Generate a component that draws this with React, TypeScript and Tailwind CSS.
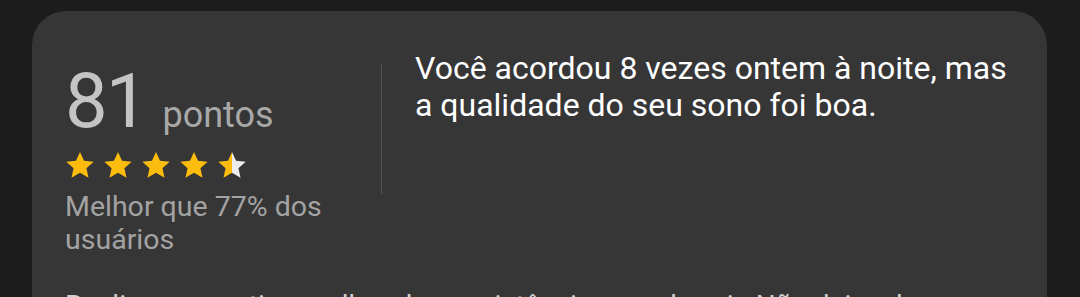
import React from "react";

function Star({ fill = "full" }: { fill?: "full" | "half" }) {
  const id = "halfgrad";
  return (
    <svg width="30" height="28" viewBox="0 0 24 23" className="shrink-0">
      {fill === "half" && (
        <defs>
          <linearGradient id={id} x1="0" x2="1" y1="0" y2="0">
            <stop offset="50%" stopColor="#fcbc0d" />
            <stop offset="50%" stopColor="#ececec" />
          </linearGradient>
        </defs>
      )}
      <path
        d="M12 0.8l3.3 7.2 7.9 0.8-5.9 5.3 1.7 7.8L12 17.9l-7 4 1.7-7.8L0.8 8.8l7.9-0.8z"
        fill={fill === "half" ? `url(#${id})` : "#fcbc0d"}
      />
    </svg>
  );
}

export default function App() {
  return (
    <div
      className="w-[1080px] h-[297px] overflow-hidden bg-[#1c1c1c] pt-[11px] pl-[32px]"
      style={{ fontFamily: "Roboto, 'Noto Sans', sans-serif" }}
    >
      <div className="w-[1015px] h-[320px] rounded-[34px] bg-[#363636] pl-[33px] pr-[100px] pt-[52px]">
        <div className="flex">
          <div className="w-[316px] shrink-0">
            <div className="flex items-baseline text-[#c4c4c4]">
              <span className="text-[76px] leading-[76px] tracking-[-2px]">81</span>
              <span className="ml-[16px] text-[36px] leading-[34px] text-[#a8a8a8]">pontos</span>
            </div>
            <div className="flex gap-[8px] mt-[12px] ml-[0px]">
              <Star />
              <Star />
              <Star />
              <Star />
              <Star fill="half" />
            </div>
            <div className="mt-[11px] text-[28.5px] leading-[33px] text-[#a3a3a3]">
              Melhor que 77% dos
              <br />
              usuários
            </div>
          </div>
          <div className="w-px bg-[#555555] mt-[1px] h-[130px] shrink-0" />
          <div className="pl-[33px] -mt-[13px] text-[32px] leading-[37px] text-white whitespace-nowrap">
            Você acordou 8 vezes ontem à noite, mas
            <br />a qualidade do seu sono foi boa.
          </div>
        </div>
        <div className="mt-[33px] text-[28px] leading-[34px] text-[#d0d0d0]">
          Realize uma rotina melhor de consistência para dormir. Não deixe de manter horários regulares.
        </div>
      </div>
    </div>
  );
}
